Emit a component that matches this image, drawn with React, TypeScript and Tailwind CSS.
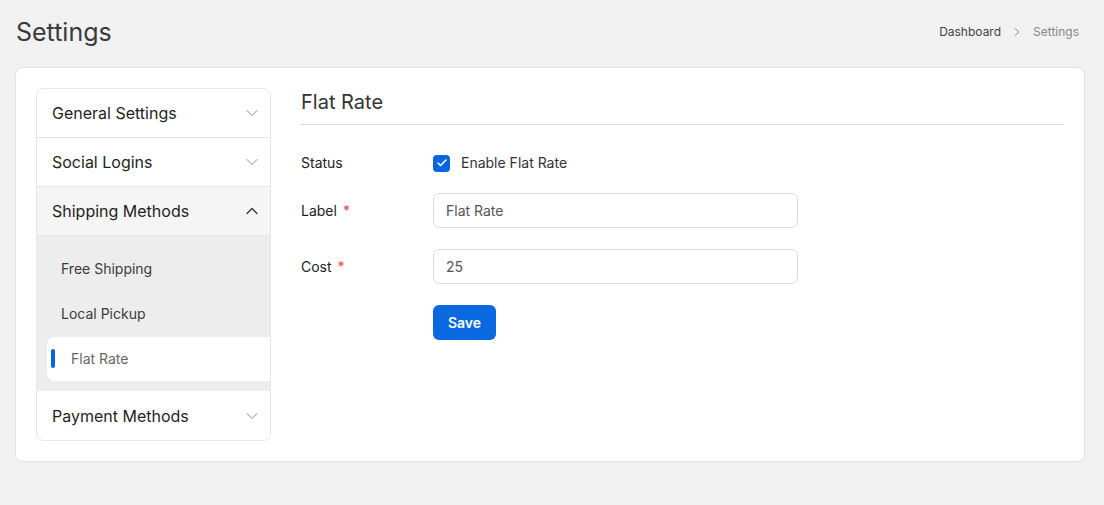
import { ChevronDown, ChevronUp, ChevronRight, Check } from "lucide-react";

const font = { fontFamily: "Inter, 'Noto Sans', sans-serif" };

const SectionRow = ({ title, open, active }: { title: string; open?: boolean; active?: boolean }) => (
  <div
    className={`flex h-[49px] items-center justify-between border-b border-[#e6e6e6] pl-[15px] pr-[8px] ${
      active ? "bg-[#f5f5f5]" : "bg-white"
    }`}
  >
    <span className="text-base text-[#1f1f24]">{title}</span>
    {open ? (
      <ChevronUp size={20} strokeWidth={1.5} className="text-[#333]" />
    ) : (
      <ChevronDown size={20} strokeWidth={1.2} className="text-[#8a8a8a]" />
    )}
  </div>
);

const SubItem = ({ label, active }: { label: string; active?: boolean }) =>
  active ? (
    <div className="relative flex h-[44px] items-center rounded-l-lg bg-white pl-[24px]">
      <span className="absolute left-[4px] top-[12px] h-[19px] w-[4px] rounded-full bg-[#0a66e0]" />
      <span className="text-sm text-[#666]">{label}</span>
    </div>
  ) : (
    <div className="flex h-[44px] items-center pl-[14px]">
      <span className="text-sm text-[#3d3a3a]">{label}</span>
    </div>
  );

const FieldLabel = ({ text, required }: { text: string; required?: boolean }) => (
  <div className="w-[132px] shrink-0 text-sm text-[#222]">
    {text}
    {required && <span className="ml-1.5 text-[#e5484d]">*</span>}
  </div>
);

export default function App() {
  return (
    <div style={font} className="min-h-[505px] bg-[#f1f1f1] pb-10">
      <div className="flex h-[48px] items-end justify-between pl-4 pr-[25px]">
        <h1 className="text-[25px] leading-8 text-[#3a3a3d]">Settings</h1>
        <nav className="mb-[8px] flex items-center gap-[9px] text-xs">
          <span className="text-[#444]">Dashboard</span>
          <ChevronRight size={14} strokeWidth={1.6} className="text-[#777]" />
          <span className="text-[#888]">Settings</span>
        </nav>
      </div>

      <div className="ml-[15px] mr-[19px] mt-[19px] flex gap-[30px] rounded-lg border border-[#e2e2e2] bg-white p-5">
        <aside className="w-[235px] shrink-0 overflow-hidden rounded-lg border border-[#e6e6e6]">
          <SectionRow title="General Settings" />
          <SectionRow title="Social Logins" />
          <SectionRow title="Shipping Methods" open active />
          <div className="flex flex-col gap-px bg-[#ededed] pb-[10px] pl-[10px] pt-[11px]">
            <SubItem label="Free Shipping" />
            <SubItem label="Local Pickup" />
            <SubItem label="Flat Rate" active />
          </div>
          <div className="flex h-[49px] items-center justify-between bg-white pl-[15px] pr-[8px]">
            <span className="text-base text-[#1f1f24]">Payment Methods</span>
            <ChevronDown size={20} strokeWidth={1.2} className="text-[#8a8a8a]" />
          </div>
        </aside>

        <section className="flex-1">
          <h2 className="border-b border-[#d8d8de] pb-2 text-xl leading-7 text-[#333]">Flat Rate</h2>

          <div className="mt-[28px] flex h-[20px] items-center">
            <FieldLabel text="Status" />
            <label className="flex items-center gap-[11px]">
              <span className="flex h-[17px] w-[17px] items-center justify-center rounded-[4px] bg-[#0a66e0]">
                <Check size={12} strokeWidth={3.2} className="text-white" />
              </span>
              <span className="text-sm text-[#333]">Enable Flat Rate</span>
            </label>
          </div>

          <div className="mt-[20px] flex items-center">
            <FieldLabel text="Label" required />
            <input
              defaultValue="Flat Rate"
              className="h-[35px] w-[365px] rounded-md border border-[#dcdcdc] px-3 text-sm text-[#555] outline-none"
            />
          </div>

          <div className="mt-[21px] flex items-center">
            <FieldLabel text="Cost" required />
            <input
              defaultValue="25"
              className="h-[35px] w-[365px] rounded-md border border-[#dcdcdc] px-3 text-sm text-[#555] outline-none"
            />
          </div>

          <div className="mt-[21px] flex">
            <div className="w-[132px] shrink-0" />
            <button className="h-[35px] w-[63px] rounded-md bg-[#0a68e0] text-sm font-semibold text-white">
              Save
            </button>
          </div>
        </section>
      </div>
    </div>
  );
}
